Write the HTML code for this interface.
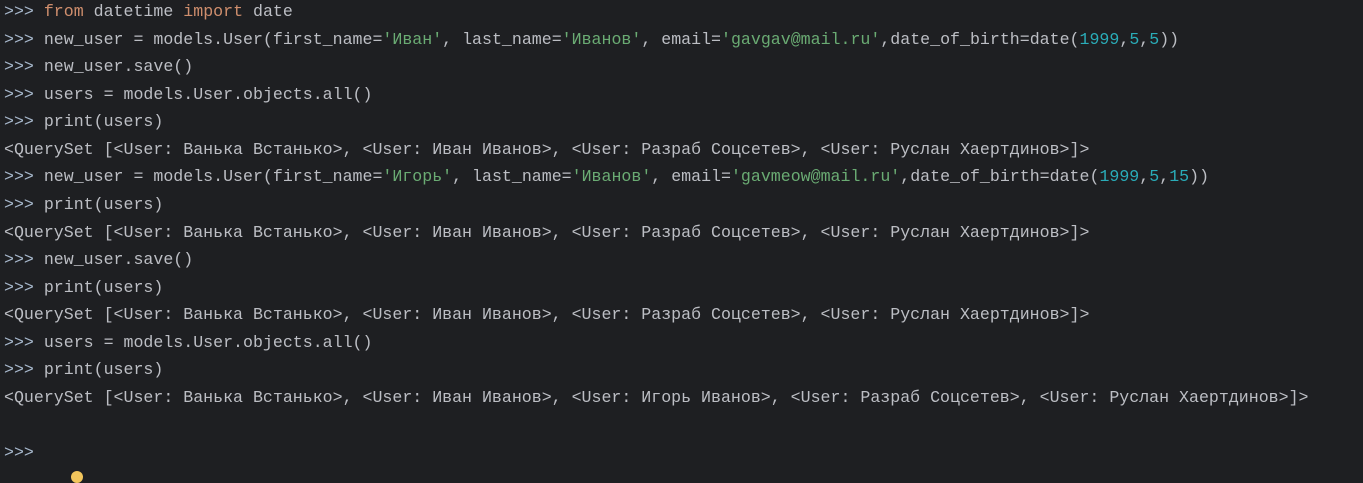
<!DOCTYPE html>
<html><head><meta charset="utf-8"><style>
html,body{margin:0;padding:0;background:#1e1f22;width:1363px;height:477px;overflow:hidden;}
pre{margin:0;position:absolute;left:4px;top:-2px;font-family:"Liberation Mono","DejaVu Sans Mono",monospace;font-size:16.6px;line-height:27.56px;color:#bcbec4;white-space:pre;}
.p{color:#a7b8cc}.k{color:#cf8e6d}.s{color:#6aab73}.n{color:#2aacb8}
.dot{position:absolute;left:71px;top:471px;width:12px;height:12px;border-radius:50%;background:#f2c55c;}
</style></head><body>
<pre><span class="p">&gt;&gt;&gt;</span> <span class="k">from</span> datetime <span class="k">import</span> date
<span class="p">&gt;&gt;&gt;</span> new_user = models.User(first_name=<span class="s">'Иван'</span>, last_name=<span class="s">'Иванов'</span>, email=<span class="s">'gavgav@mail.ru'</span>,date_of_birth=date(<span class="n">1999</span>,<span class="n">5</span>,<span class="n">5</span>))
<span class="p">&gt;&gt;&gt;</span> new_user.save()
<span class="p">&gt;&gt;&gt;</span> users = models.User.objects.all()
<span class="p">&gt;&gt;&gt;</span> print(users)
&lt;QuerySet [&lt;User: Ванька Встанько&gt;, &lt;User: Иван Иванов&gt;, &lt;User: Разраб Соцсетев&gt;, &lt;User: Руслан Хаертдинов&gt;]&gt;
<span class="p">&gt;&gt;&gt;</span> new_user = models.User(first_name=<span class="s">'Игорь'</span>, last_name=<span class="s">'Иванов'</span>, email=<span class="s">'gavmeow@mail.ru'</span>,date_of_birth=date(<span class="n">1999</span>,<span class="n">5</span>,<span class="n">15</span>))
<span class="p">&gt;&gt;&gt;</span> print(users)
&lt;QuerySet [&lt;User: Ванька Встанько&gt;, &lt;User: Иван Иванов&gt;, &lt;User: Разраб Соцсетев&gt;, &lt;User: Руслан Хаертдинов&gt;]&gt;
<span class="p">&gt;&gt;&gt;</span> new_user.save()
<span class="p">&gt;&gt;&gt;</span> print(users)
&lt;QuerySet [&lt;User: Ванька Встанько&gt;, &lt;User: Иван Иванов&gt;, &lt;User: Разраб Соцсетев&gt;, &lt;User: Руслан Хаертдинов&gt;]&gt;
<span class="p">&gt;&gt;&gt;</span> users = models.User.objects.all()
<span class="p">&gt;&gt;&gt;</span> print(users)
&lt;QuerySet [&lt;User: Ванька Встанько&gt;, &lt;User: Иван Иванов&gt;, &lt;User: Игорь Иванов&gt;, &lt;User: Разраб Соцсетев&gt;, &lt;User: Руслан Хаертдинов&gt;]&gt;

<span class="p">&gt;&gt;&gt;</span></pre>
<div class="dot"></div>
</body></html>
